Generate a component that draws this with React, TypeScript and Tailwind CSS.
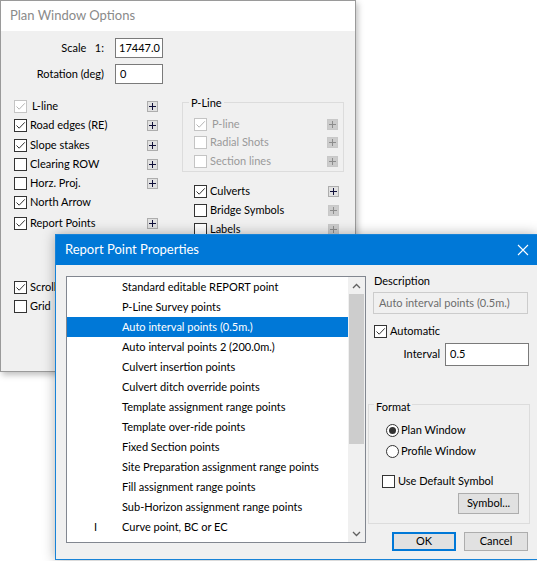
import React from 'react';

const FONT = { fontFamily: 'Lato, "Liberation Sans", sans-serif' };

function Check({ checked = false, disabled = false }: { checked?: boolean; disabled?: boolean }) {
  const stroke = disabled ? '#b4b4b4' : '#333333';
  return (
    <span
      className={`w-[13px] h-[13px] border bg-white flex items-center justify-center shrink-0 ${
        disabled ? 'border-[#c4c4c4]' : 'border-[#333333]'
      }`}
    >
      {checked && (
        <svg width="11" height="11" viewBox="0 0 11 11">
          <path d="M1.5 5.5 L4.2 8.2 L9.8 2.3" fill="none" stroke={stroke} strokeWidth="1" />
        </svg>
      )}
    </span>
  );
}

function Radio({ checked = false }: { checked?: boolean }) {
  return (
    <span className="w-[13px] h-[13px] rounded-full border border-[#333333] bg-white flex items-center justify-center shrink-0">
      {checked && <span className="w-[7px] h-[7px] rounded-full bg-[#333333]" />}
    </span>
  );
}

function Plus({ disabled = false }: { disabled?: boolean }) {
  const c = disabled ? '#8c8c8c' : '#10103a';
  return (
    <span
      className={`w-[11px] h-[11px] border flex items-center justify-center shrink-0 ${
        disabled ? 'border-[#c8c8c8] bg-[#cccccc]' : 'border-[#adadad] bg-[#e1e1e1]'
      }`}
    >
      <svg width="9" height="9" viewBox="0 0 9 9">
        <path d="M4.5 1 V8 M1 4.5 H8" stroke={c} strokeWidth="1" />
      </svg>
    </span>
  );
}

type Opt = { label: string; checked?: boolean; plus?: boolean; h: string };

const LEFT_OPTS: Opt[] = [
  { label: 'L-line', checked: true, plus: true, h: 'h-[20px]' },
  { label: 'Road edges (RE)', checked: true, plus: true, h: 'h-[19px]' },
  { label: 'Slope stakes', checked: true, plus: true, h: 'h-[20px]' },
  { label: 'Clearing ROW', plus: true, h: 'h-[19px]' },
  { label: 'Horz. Proj.', plus: true, h: 'h-[18px]' },
  { label: 'North Arrow', checked: true, h: 'h-[21px]' },
  { label: 'Report Points', checked: true, plus: true, h: 'h-[20px]' },
];

const REPORT_POINTS = [
  'Standard editable REPORT point',
  'P-Line Survey points',
  'Auto interval points (0.5m.)',
  'Auto interval points 2 (200.0m.)',
  'Culvert insertion points',
  'Culvert ditch override points',
  'Template assignment range points',
  'Template over-ride points',
  'Fixed Section points',
  'Site Preparation assignment range points',
  'Fill assignment range points',
  'Sub-Horizon assignment range points',
  'Curve point, BC or EC',
];

function PlanWindow() {
  return (
    <div className="absolute left-0 top-0 w-[356px] h-[372px] border border-[#9a9a9a] bg-[#f0f0f0] shadow-[2px_3px_6px_rgba(0,0,0,0.25)] flex flex-col">
      <div className="h-[30px] bg-white flex items-center pl-[9px] text-[13px] text-[#8a8a8a]">
        Plan Window Options
      </div>

      <div className="flex flex-col text-[11px] text-black">
        {/* scale + rotation */}
        <div className="mt-[7px] flex items-center h-[20px]">
          <span className="w-[104px] text-right pr-[1px]">Scale&nbsp;&nbsp; 1:</span>
          <span className="ml-[10px] w-[48px] h-[20px] border border-[#7a7a7a] bg-white flex items-center px-[3px] overflow-hidden whitespace-nowrap">
            17447.0
          </span>
        </div>
        <div className="mt-[6px] flex items-center h-[20px]">
          <span className="w-[104px] text-right pr-[1px]">Rotation (deg)</span>
          <span className="ml-[10px] w-[48px] h-[20px] border border-[#7a7a7a] bg-white flex items-center px-[4px]">
            0
          </span>
        </div>

        <div className="mt-[12px] flex">
          {/* left column */}
          <div className="w-[181px] flex flex-col pl-[13px]">
            {LEFT_OPTS.map((o, i) => (
              <div key={o.label} className={`${o.h} flex items-center`}>
                <Check checked={o.checked} disabled={i === 0} />
                <span className={`ml-[3px] w-[117px] ${i === 0 ? 'pl-[2px]' : ''}`}>{o.label}</span>
                {o.plus && <Plus />}
              </div>
            ))}
            <div className="h-[45px]" />
            <div className="h-[19px] flex items-center">
              <Check checked />
              <span className="ml-[3px]">Scroll</span>
            </div>
            <div className="h-[18px] flex items-center">
              <Check />
              <span className="ml-[3px]">Grid</span>
            </div>
          </div>

          {/* right column */}
          <div className="w-[162px] flex flex-col">
            <div className="relative mt-[6px] h-[70px] border border-[#dcdcdc] flex flex-col pt-[12px] pl-[11px] pr-[5px]">
              <span className="absolute -top-[8px] left-[6px] bg-[#f0f0f0] px-[2px]">P-Line</span>
              {[
                { l: 'P-line', c: true, h: 'h-[18px]' },
                { l: 'Radial Shots', c: false, h: 'h-[19px]' },
                { l: 'Section lines', c: false, h: 'h-[19px]' },
              ].map((o, i) => (
                <div key={o.l} className={`${o.h} flex items-center text-[#9a9a9a]`}>
                  <Check checked={o.c} disabled />
                  <span className={`ml-[3px] flex-1 ${i === 0 ? 'pl-[2px]' : ''}`}>{o.l}</span>
                  <Plus disabled />
                </div>
              ))}
            </div>
            <div className="mt-[10px] flex flex-col pl-[12px] pr-[5px]">
              {[
                { l: 'Culverts', c: true, d: false },
                { l: 'Bridge Symbols', c: false, d: true },
                { l: 'Labels', c: false, d: true },
              ].map((o) => (
                <div key={o.l} className="h-[19px] flex items-center">
                  <Check checked={o.c} />
                  <span className="ml-[3px] flex-1">{o.l}</span>
                  <Plus disabled={o.d} />
                </div>
              ))}
            </div>
          </div>
        </div>
      </div>
    </div>
  );
}

function Btn({ children, primary = false, w }: { children: React.ReactNode; primary?: boolean; w: string }) {
  return (
    <span
      className={`${w} h-[19px] bg-[#e1e1e1] flex items-center justify-center ${
        primary ? 'border-2 border-[#0078d7]' : 'border border-[#adadad]'
      }`}
    >
      {children}
    </span>
  );
}

function ReportDialog() {
  return (
    <div className="absolute left-[55px] top-[234px] w-[482px] h-[326px] border border-[#1883d7] border-r-0 bg-[#f0f0f0] shadow-[0_0_12px_rgba(0,0,0,0.3)] flex flex-col">
      <div className="h-[30px] bg-[#0078d7] flex items-center justify-between pl-[9px] pr-[8px] text-white text-[13px]">
        <span>Report Point Properties</span>
        <svg width="12" height="12" viewBox="0 0 12 12">
          <path d="M1 1 L11 11 M11 1 L1 11" stroke="white" strokeWidth="1.1" />
        </svg>
      </div>

      <div className="flex text-[11px] text-black pt-[11px] pl-[10px]">
        {/* list */}
        <div className="w-[300px] h-[267px] border border-[#828790] bg-white flex">
          <div className="flex-1 flex flex-col">
            {REPORT_POINTS.map((p, i) => (
              <div
                key={p}
                className={`h-[20px] flex items-center ${i === 2 ? 'bg-[#0078d7] text-white' : ''}`}
              >
                <span className="w-[55px] pl-[27px]">{i === 12 ? 'I' : ''}</span>
                <span className="whitespace-nowrap">{p}</span>
              </div>
            ))}
          </div>
          <div className="w-[17px] bg-[#f0f0f0] flex flex-col">
            <div className="h-[17px] flex items-center justify-center">
              <svg width="9" height="6" viewBox="0 0 9 6">
                <path d="M1 5 L4.5 1.5 L8 5" fill="none" stroke="#606060" strokeWidth="1.3" />
              </svg>
            </div>
            <div className="h-[150px] mx-[1px] bg-[#cdcdcd]" />
            <div className="flex-1" />
            <div className="h-[17px] flex items-center justify-center">
              <svg width="9" height="6" viewBox="0 0 9 6">
                <path d="M1 1 L4.5 4.5 L8 1" fill="none" stroke="#606060" strokeWidth="1.3" />
              </svg>
            </div>
          </div>
        </div>

        {/* right panel */}
        <div className="w-[162px] ml-[2px] flex flex-col">
          <span className="ml-[6px] mt-[-3px] h-[16px] leading-[16px]">Description</span>
          <div className="ml-[5px] mt-[3px] w-[155px] h-[22px] border border-[#cccccc] bg-[#f0f0f0] text-[#6d6d6d] flex items-center px-[5px] whitespace-nowrap overflow-hidden">
            Auto interval points (0.5m.)
          </div>
          <div className="ml-[6px] mt-[11px] h-[13px] flex items-center">
            <Check checked />
            <span className="ml-[3px]">Automatic</span>
          </div>
          <div className="mt-[5px] flex items-center">
            <span className="w-[72px] text-right">Interval</span>
            <span className="ml-[5px] w-[84px] h-[23px] border border-[#7a7a7a] bg-white flex items-center px-[4px]">
              0.5
            </span>
          </div>

          <div className="relative mt-[38px] w-[162px] h-[120px] border border-[#dcdcdc] flex flex-col pt-[19px] pl-[17px]">
            <span className="absolute -top-[6px] left-[5px] bg-[#f0f0f0] px-[2px]">Format</span>
            <div className="h-[13px] flex items-center">
              <Radio checked />
              <span className="ml-[2px]">Plan Window</span>
            </div>
            <div className="mt-[8px] h-[13px] flex items-center">
              <Radio />
              <span className="ml-[2px]">Profile Window</span>
            </div>
            <div className="mt-[17px] ml-[-4px] h-[13px] flex items-center">
              <Check />
              <span className="ml-[3px]">Use Default Symbol</span>
            </div>
            <div className="mt-[5px] flex justify-end pr-[10px]">
              <Btn w="w-[61px] h-[21px]">Symbol...</Btn>
            </div>
          </div>

          <div className="mt-[8px] flex gap-[8px] ml-[24px]">
            <Btn primary w="w-[64px]">OK</Btn>
            <Btn w="w-[64px]">Cancel</Btn>
          </div>
        </div>
      </div>
    </div>
  );
}

export default function App() {
  return (
    <div className="relative w-[537px] h-[561px] bg-white overflow-hidden" style={FONT}>
      <PlanWindow />
      <ReportDialog />
    </div>
  );
}
